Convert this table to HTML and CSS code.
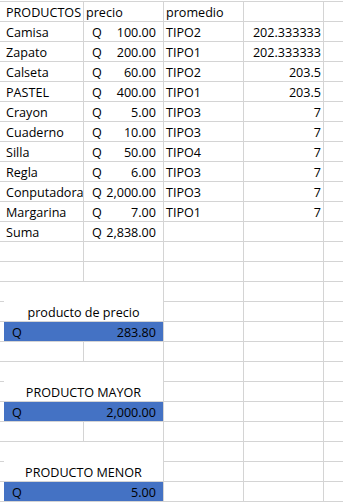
FILE: index.html
```html
<!DOCTYPE html>
<html>
<head>
<meta charset="utf-8">
<link rel="stylesheet" href="styles.css">
</head>
<body>
<div class="sheet">
  <div class="c"></div><div class="c">PRODUCTOS</div><div class="c">precio</div><div class="c">promedio</div><div class="c"></div><div class="c"></div>

  <div class="c"></div><div class="c">Camisa</div><div class="c acct"><span>Q</span><span>100.00</span></div><div class="c">TIPO2</div><div class="c num">202.333333</div><div class="c"></div>
  <div class="c"></div><div class="c">Zapato</div><div class="c acct"><span>Q</span><span>200.00</span></div><div class="c">TIPO1</div><div class="c num">202.333333</div><div class="c"></div>
  <div class="c"></div><div class="c">Calseta</div><div class="c acct"><span>Q</span><span>60.00</span></div><div class="c">TIPO2</div><div class="c num">203.5</div><div class="c"></div>
  <div class="c"></div><div class="c">PASTEL</div><div class="c acct"><span>Q</span><span>400.00</span></div><div class="c">TIPO1</div><div class="c num">203.5</div><div class="c"></div>
  <div class="c"></div><div class="c">Crayon</div><div class="c acct"><span>Q</span><span>5.00</span></div><div class="c">TIPO3</div><div class="c num">7</div><div class="c"></div>
  <div class="c"></div><div class="c">Cuaderno</div><div class="c acct"><span>Q</span><span>10.00</span></div><div class="c">TIPO3</div><div class="c num">7</div><div class="c"></div>
  <div class="c"></div><div class="c">Silla</div><div class="c acct"><span>Q</span><span>50.00</span></div><div class="c">TIPO4</div><div class="c num">7</div><div class="c"></div>
  <div class="c"></div><div class="c">Regla</div><div class="c acct"><span>Q</span><span>6.00</span></div><div class="c">TIPO3</div><div class="c num">7</div><div class="c"></div>
  <div class="c"></div><div class="c">Conputadora</div><div class="c acct"><span>Q</span><span>2,000.00</span></div><div class="c">TIPO3</div><div class="c num">7</div><div class="c"></div>
  <div class="c"></div><div class="c">Margarina</div><div class="c acct"><span>Q</span><span>7.00</span></div><div class="c">TIPO1</div><div class="c num">7</div><div class="c"></div>
  <div class="c"></div><div class="c">Suma</div><div class="c acct"><span>Q</span><span>2,838.00</span></div><div class="c"></div><div class="c"></div><div class="c"></div>

  <div class="c"></div><div class="c"></div><div class="c"></div><div class="c"></div><div class="c"></div><div class="c"></div>
  <div class="c"></div><div class="c"></div><div class="c"></div><div class="c"></div><div class="c"></div><div class="c"></div>

  <div class="c"></div><div class="c lbl">producto de precio</div><div class="c"></div><div class="c"></div><div class="c"></div>
  <div class="c"></div><div class="c"></div><div class="c"></div><div class="c"></div>
  <div class="c"></div><div class="c acct wide blue"><span>Q</span><span>283.80</span></div><div class="c"></div><div class="c"></div><div class="c"></div>
  <div class="c"></div><div class="c"></div><div class="c"></div><div class="c"></div><div class="c"></div><div class="c"></div>

  <div class="c"></div><div class="c lbl">PRODUCTO MAYOR</div><div class="c"></div><div class="c"></div><div class="c"></div>
  <div class="c"></div><div class="c"></div><div class="c"></div><div class="c"></div>
  <div class="c"></div><div class="c acct wide blue"><span>Q</span><span>2,000.00</span></div><div class="c"></div><div class="c"></div><div class="c"></div>
  <div class="c"></div><div class="c"></div><div class="c"></div><div class="c"></div><div class="c"></div><div class="c"></div>

  <div class="c"></div><div class="c lbl">PRODUCTO MENOR</div><div class="c"></div><div class="c"></div><div class="c"></div>
  <div class="c"></div><div class="c"></div><div class="c"></div><div class="c"></div>
  <div class="c"></div><div class="c acct wide blue"><span>Q</span><span>5.00</span></div><div class="c"></div><div class="c"></div><div class="c"></div>
</div>
</body>
</html>
```

FILE: styles.css
```css
html, body {
  margin: 0;
  background: #fff;
}
body {
  font-family: "Open Sans", "Noto Sans", sans-serif;
  font-size: 12.6px;
  color: #000;
}
.sheet {
  margin-top: 1px;
  display: grid;
  grid-template-columns: 3px repeat(4, 79px) 19px;
  grid-auto-rows: 19px;
  gap: 1px;
  padding: 1px 0;
  background: #d4d4d4;
}
.c {
  background: #fff;
  display: flex;
  align-items: flex-end;
  padding: 0 2px 1px 2px;
  line-height: 15px;
  white-space: nowrap;
  overflow: hidden;
}
.num {
  justify-content: flex-end;
}
.acct {
  justify-content: space-between;
  padding-left: 8px;
  padding-right: 7px;
}
.lbl {
  grid-column: span 2;
  grid-row: span 2;
  justify-content: center;
}
.wide {
  grid-column: span 2;
}
.blue {
  background: #4472c4;
}
```
